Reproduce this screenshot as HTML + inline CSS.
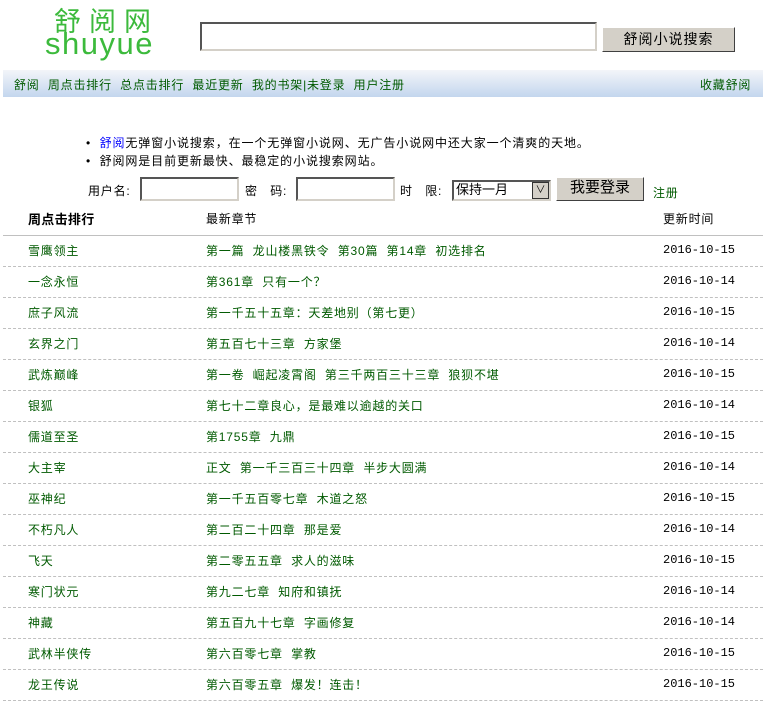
<!DOCTYPE html>
<html><head><meta charset="utf-8"><style>
*{margin:0;padding:0;box-sizing:border-box}
body{width:766px;height:696px;background:#fff;position:relative;overflow:hidden;font-family:"Liberation Sans","Noto Sans CJK SC","WenQuanYi Zen Hei",sans-serif;font-size:12px;color:#000}
.a{position:absolute;white-space:pre;letter-spacing:0.8px}
.g{color:#005a00}
.inp{position:absolute;background:#fff;border:2px solid;border-color:#555 #d4d0c8 #d4d0c8 #555}
.btn{position:absolute;background:#d4d0c8;border:1px solid;border-color:#fff #404040 #404040 #fff;text-align:center}
.row{position:absolute;left:3px;width:760px;height:31px;border-bottom:1px dashed #c0c0c0}
.row span{position:absolute;top:6px;color:#005a00;white-space:pre;letter-spacing:0.8px}
.row span.d{color:#000;letter-spacing:0;font-family:"Liberation Mono",monospace;font-size:12px;top:7px}
</style></head><body>
<div class="a" style="left:54px;top:0px;font-size:27px;color:#3cba3c;letter-spacing:8px">舒阅网</div>
<div class="a" style="left:45px;top:28px;font-size:31px;line-height:32px;color:#3cba3c;letter-spacing:1.5px">shuyue</div>
<div class="inp" style="left:200px;top:22px;width:397px;height:29px"></div>
<div class="btn" style="left:602px;top:27px;width:133px;height:25px;font-size:14px;line-height:22px;letter-spacing:1px">舒阅小说搜索</div>
<div class="a" style="left:3px;top:70px;width:760px;height:27px;background:linear-gradient(#f3f5f9,#c3d6ee)"></div>
<div class="a g" style="left:14px;top:76px">舒阅  周点击排行  总点击排行  最近更新  我的书架|未登录  用户注册</div>
<div class="a g" style="left:700px;top:76px">收藏舒阅</div>
<div class="a" style="left:86px;top:134px;letter-spacing:0.9px">•  <span style="color:#00f">舒阅</span>无弹窗小说搜索，在一个无弹窗小说网、无广告小说网中还大家一个清爽的天地。</div>
<div class="a" style="left:86px;top:152px;letter-spacing:0.9px">•  舒阅网是目前更新最快、最稳定的小说搜索网站。</div>
<div class="a" style="left:88px;top:182px">用户名:</div>
<div class="inp" style="left:140px;top:177px;width:99px;height:24px"></div>
<div class="a" style="left:245px;top:182px">密   码:</div>
<div class="inp" style="left:296px;top:177px;width:99px;height:24px"></div>
<div class="a" style="left:400px;top:182px">时   限:</div>
<div class="inp" style="left:452px;top:180px;width:99px;height:21px;font-size:13px;padding-left:2px;line-height:16px">保持一月<div style="position:absolute;right:0;top:0;width:17px;height:17px;background:#d4d0c8;border:1px solid #333;text-align:center;font-size:10px;line-height:15px">∨</div></div>
<div class="btn" style="left:556px;top:177px;width:88px;height:24px;font-size:15px;line-height:20px">我要登录</div>
<div class="a g" style="left:653px;top:184px">注册</div>
<div class="a" style="left:28px;top:209px;font-weight:bold;font-size:13px;letter-spacing:0.3px">周点击排行</div>
<div class="a" style="left:206px;top:210px">最新章节</div>
<div class="a" style="left:663px;top:210px">更新时间</div>
<div class="a" style="left:3px;top:235px;width:760px;height:1px;background:#c0c0c0"></div>
<div class="row" style="top:236px"><span style="left:25px">雪鹰领主</span><span style="left:203px">第一篇  龙山楼黑铁令  第30篇  第14章  初选排名</span><span class="d" style="left:660px">2016-10-15</span></div>
<div class="row" style="top:267px"><span style="left:25px">一念永恒</span><span style="left:203px">第361章  只有一个？</span><span class="d" style="left:660px">2016-10-14</span></div>
<div class="row" style="top:298px"><span style="left:25px">庶子风流</span><span style="left:203px">第一千五十五章：天差地别（第七更）</span><span class="d" style="left:660px">2016-10-15</span></div>
<div class="row" style="top:329px"><span style="left:25px">玄界之门</span><span style="left:203px">第五百七十三章  方家堡</span><span class="d" style="left:660px">2016-10-14</span></div>
<div class="row" style="top:360px"><span style="left:25px">武炼巅峰</span><span style="left:203px">第一卷  崛起凌霄阁  第三千两百三十三章  狼狈不堪</span><span class="d" style="left:660px">2016-10-15</span></div>
<div class="row" style="top:391px"><span style="left:25px">银狐</span><span style="left:203px">第七十二章良心，是最难以逾越的关口</span><span class="d" style="left:660px">2016-10-14</span></div>
<div class="row" style="top:422px"><span style="left:25px">儒道至圣</span><span style="left:203px">第1755章  九鼎</span><span class="d" style="left:660px">2016-10-15</span></div>
<div class="row" style="top:453px"><span style="left:25px">大主宰</span><span style="left:203px">正文  第一千三百三十四章  半步大圆满</span><span class="d" style="left:660px">2016-10-14</span></div>
<div class="row" style="top:484px"><span style="left:25px">巫神纪</span><span style="left:203px">第一千五百零七章  木道之怒</span><span class="d" style="left:660px">2016-10-15</span></div>
<div class="row" style="top:515px"><span style="left:25px">不朽凡人</span><span style="left:203px">第二百二十四章  那是爱</span><span class="d" style="left:660px">2016-10-14</span></div>
<div class="row" style="top:546px"><span style="left:25px">飞天</span><span style="left:203px">第二零五五章  求人的滋味</span><span class="d" style="left:660px">2016-10-15</span></div>
<div class="row" style="top:577px"><span style="left:25px">寒门状元</span><span style="left:203px">第九二七章  知府和镇抚</span><span class="d" style="left:660px">2016-10-14</span></div>
<div class="row" style="top:608px"><span style="left:25px">神藏</span><span style="left:203px">第五百九十七章  字画修复</span><span class="d" style="left:660px">2016-10-14</span></div>
<div class="row" style="top:639px"><span style="left:25px">武林半侠传</span><span style="left:203px">第六百零七章  掌教</span><span class="d" style="left:660px">2016-10-15</span></div>
<div class="row" style="top:670px"><span style="left:25px">龙王传说</span><span style="left:203px">第六百零五章  爆发！连击！</span><span class="d" style="left:660px">2016-10-15</span></div>
</body></html>
